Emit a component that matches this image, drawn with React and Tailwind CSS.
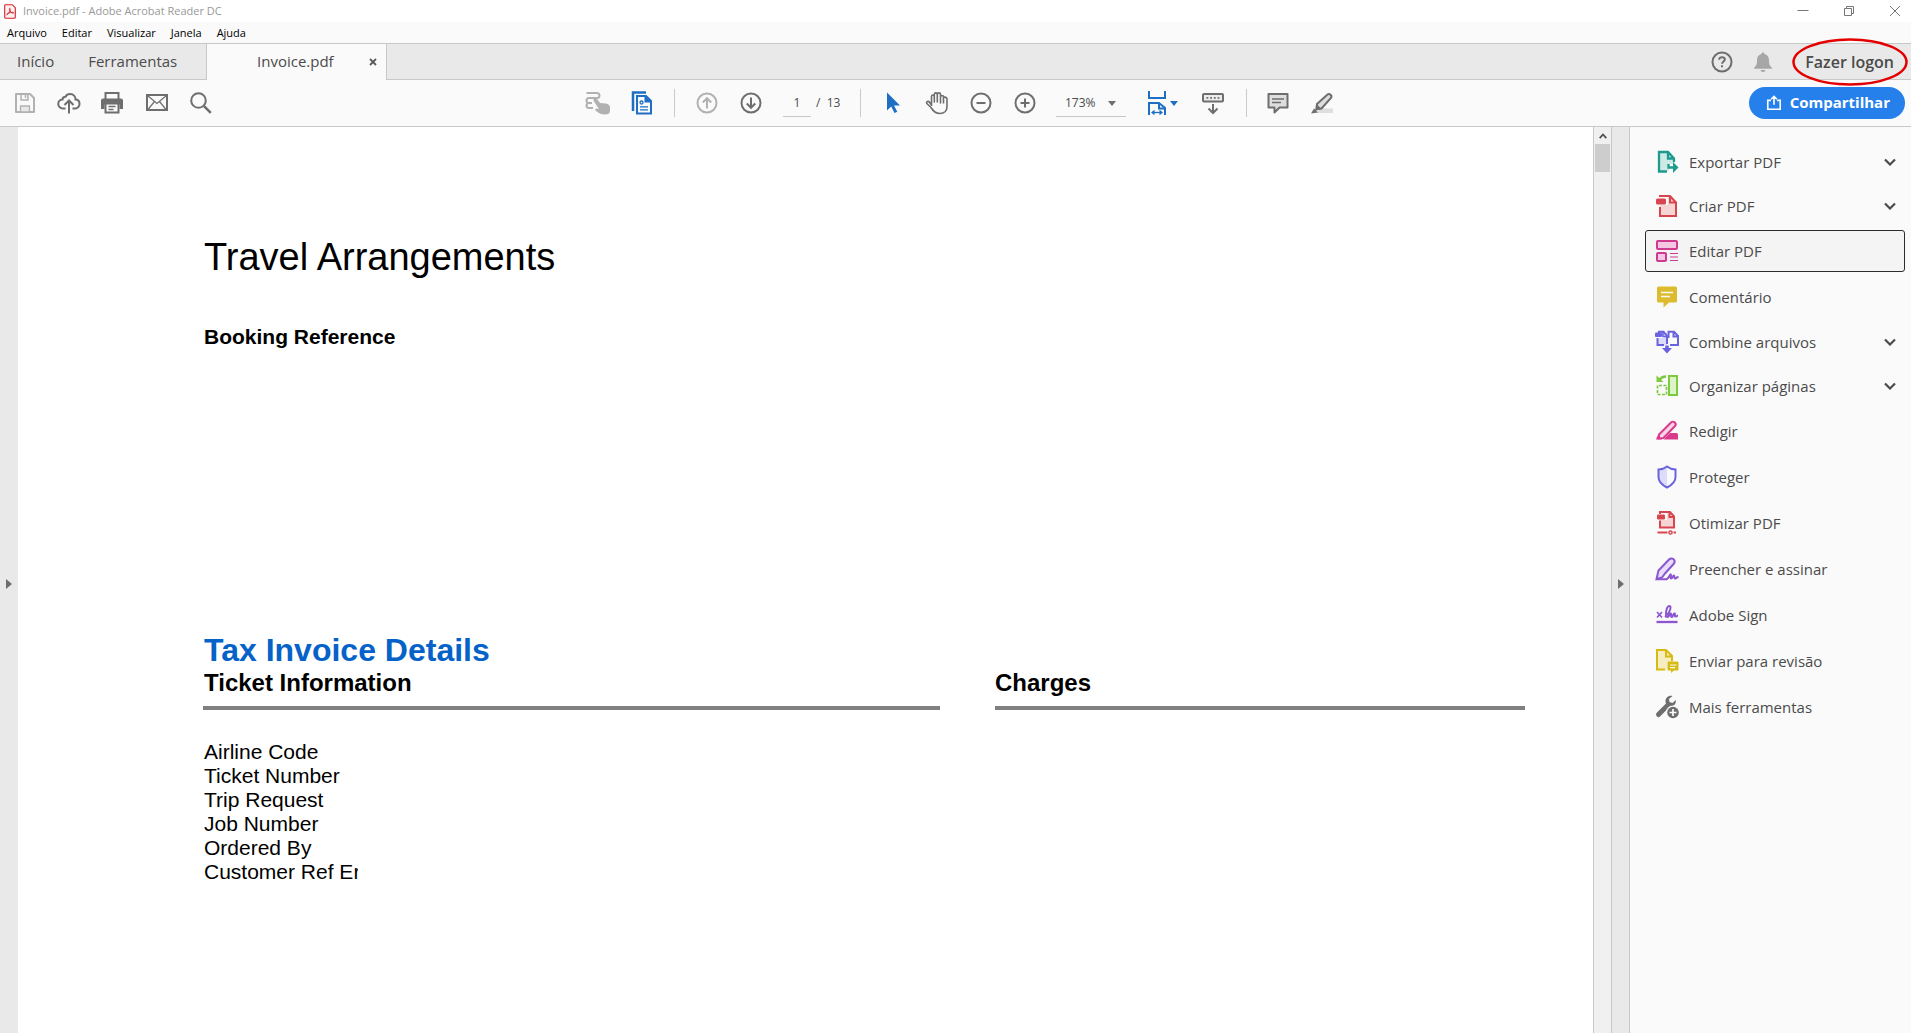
import { useState } from "react";

const menus = ["Arquivo", "Editar", "Visualizar", "Janela", "Ajuda"];

const ticketFields = [
  "Airline Code",
  "Ticket Number",
  "Trip Request",
  "Job Number",
  "Ordered By",
  "Customer Ref Er",
];

// Base wrapper for all 24px icons
function Icon({ children, className = "" }) {
  return (
    <svg
      viewBox="0 0 24 24"
      className={`size-6 shrink-0 overflow-visible ${className}`}
      fill="none"
      stroke="currentColor"
      strokeWidth="2"
      aria-hidden="true"
    >
      {children}
    </svg>
  );
}

function ToolButton({ label, className = "text-[#6e6e6e]", children }) {
  return (
    <button type="button" aria-label={label} className={`flex h-11 w-11 items-center justify-center ${className}`}>
      <Icon>{children}</Icon>
    </button>
  );
}

function Separator() {
  return (
    <div className="flex w-[22px] justify-center">
      <div className="h-7 w-px bg-[#cacaca]" />
    </div>
  );
}

const tools = [
  {
    name: "Exportar PDF",
    color: "text-[#1f9a8e]",
    expandable: true,
    icon: (
      <>
        <path d="M4 2h9l6 6v6h-5v7H4z" fill="#cdeae6" stroke="none" />
        <path d="M12 21.500H4V2h9l6 6.500V12M13 2v6.500h6" strokeWidth="2.300" />
        <path d="M13.500 14v3.500h6" strokeWidth="2.300" />
        <path d="M18 12l5.500 5.500L18 23z" fill="currentColor" stroke="none" />
      </>
    ),
  },
  {
    name: "Criar PDF",
    color: "text-[#d9454f]",
    expandable: true,
    icon: (
      <>
        <path d="M5 11h8V3h3l5 6v13H5z" fill="#f5d5d3" stroke="none" />
        <path d="M5 3V2h10l6 6.500V22H5v-9M15 2v6.500h6" />
        <rect x="1" y="4.500" width="10" height="6" rx="1.500" fill="currentColor" stroke="none" />
      </>
    ),
  },
  {
    name: "Editar PDF",
    color: "text-[#cf3a8e]",
    active: true,
    icon: (
      <>
        <rect x="2" y="2" width="20" height="8" rx="1" fill="#f5c6e4" />
        <rect x="2" y="14" width="9" height="8" rx="1" fill="#f5c6e4" />
        <path d="M15 14.500h8M15 18h8M15 21.500h8" strokeWidth="1.200" />
      </>
    ),
  },
  {
    name: "Comentário",
    color: "text-[#dcbc2e]",
    icon: (
      <>
        <path d="M3.500 1.500h17a1.500 1.500 0 0 1 1.500 1.500v13a1.500 1.500 0 0 1-1.500 1.500H14L8.500 22.500v-5h-5A1.500 1.500 0 0 1 2 16V3a1.500 1.500 0 0 1 1.500-1.500z" fill="currentColor" stroke="none" />
        <path d="M6 7.500h12M6 11.500h9" stroke="#fafafa" strokeWidth="1.600" />
      </>
    ),
  },
  {
    name: "Combine arquivos",
    color: "text-[#6a63e0]",
    expandable: true,
    icon: (
      <>
        <path d="M3 8h6V3h3v12H3z" fill="#dddcfb" stroke="none" />
        <path d="M2.500 8v7h6.500M4 3V1.800h4.500l3.500 4V14" />
        <path d="M15 15h8V6l-4-4.200h-5.500V8M18.500 2v4.500H23" />
        <path d="M8 2v4.500h4" strokeWidth="1.600" />
        <rect x="0" y="2.500" width="7" height="4.500" rx="1" fill="currentColor" stroke="none" />
        <path d="M12 15.500v4" strokeWidth="3.500" />
        <path d="M7 18h10l-5 5.500z" fill="currentColor" stroke="none" />
      </>
    ),
  },
  {
    name: "Organizar páginas",
    color: "text-[#7ccb3c]",
    expandable: true,
    icon: (
      <>
        <rect x="14" y="2" width="8" height="19" fill="#ddf4c8" />
        <path d="M11.500 11.500H2.500v9h9z" strokeDasharray="3 1.500" strokeWidth="1.700" />
        <path d="M1.500 1.500v6.500h7z" fill="currentColor" stroke="none" />
        <path d="M4.500 6c1.500-2.500 3.500-3.500 6.500-3.500" strokeWidth="2.500" />
      </>
    ),
  },
  {
    name: "Redigir",
    color: "text-[#d93a8c]",
    icon: (
      <>
        <path d="M4 15.500L16 3.500a2.600 2.600 0 0 1 3.800 3.800L8.500 19l-4.500.500z" fill="#f8d3e8" />
        <path d="M15 14h6.500a1.500 1.500 0 0 1 1.500 1.500V20.500H8.500z" fill="currentColor" stroke="none" />
        <path d="M2.500 16.500L7 20.500H1z" fill="currentColor" stroke="none" />
      </>
    ),
  },
  {
    name: "Proteger",
    color: "text-[#6a63e0]",
    icon: (
      <>
        <path d="M12 2v20c-5-2.500-8.500-6-8.500-10V4.500C7 4.500 9.500 3.500 12 2z" fill="#dddcfb" stroke="none" />
        <path d="M12 1.500c2.500 2 5 2.800 8.500 3V12c0 4.500-3.500 8-8.500 10.500C7 20 3.500 16.500 3.500 12V4.500c3.500-.2 6-1 8.500-3z" />
      </>
    ),
  },
  {
    name: "Otimizar PDF",
    color: "text-[#d9454f]",
    icon: (
      <>
        <path d="M5 9h7V2l7 5v10H5z" fill="#f5d5d3" stroke="none" />
        <path d="M5 3V1h10l4 4.500V16.500H5v-7M14.500 1v5H19" />
        <rect x="2" y="3.500" width="8" height="5" rx="1.200" fill="currentColor" stroke="none" />
        <path d="M2.500 21.500h10M18.500 21.500H21" strokeWidth="2" />
        <circle cx="15.500" cy="21.500" r="1.600" strokeWidth="1.500" />
      </>
    ),
  },
  {
    name: "Preencher e assinar",
    color: "text-[#8b56cf]",
    icon: (
      <>
        <path d="M1.500 22l2-8.500L14 2.500c1.600-1.600 4-1.200 5 .200s.8 3-.4 4.300L10 16.500l-3 4z" fill="#e9dcfa" />
        <path d="M1 22.300h9.500c3 0 4-4.300 5-4.800 1.300-.5-.7 3.800.7 4 1.300 0 1.500-3 2.700-3 1 0 0 3 1.200 3s1.200-1.500 3.400-1.500" />
      </>
    ),
  },
  {
    name: "Adobe Sign",
    color: "text-[#8b56cf]",
    icon: (
      <>
        <path d="M2 9l5 5.500M7 9l-5 5.500" strokeWidth="1.700" />
        <path d="M10 14c3-2.500 6-7 5.500-10-.5-2-3-1-3.800 2-.8 3-1.200 8 .8 8s1.500-3.500 3-3.500-.3 3.500 1.300 3.500 1.200-3.500 2.600-3.500-.3 3 1.200 3 1.400-1 2.400-1" />
        <path d="M1.500 19h21" strokeWidth="2.300" />
      </>
    ),
  },
  {
    name: "Enviar para revisão",
    color: "text-[#d8bb12]",
    icon: (
      <>
        <path d="M2 1.500h9l6 6V13h-5v8H2z" fill="#f6edc0" stroke="none" />
        <path d="M10 20.500H2V1h9l6 6v5M11 1v6.500h6" />
        <path d="M13.500 12.500h9a1 1 0 0 1 1 1v7a1 1 0 0 1-1 1H19l-3 2.500v-2.500h-2.500a1 1 0 0 1-1-1v-7a1 1 0 0 1 1-1z" fill="currentColor" stroke="none" />
        <path d="M15 16h6.500M15 18.700h5" stroke="#fafafa" strokeWidth="1.200" />
      </>
    ),
  },
  {
    name: "Mais ferramentas",
    color: "text-[#6e6e6e]",
    icon: (
      <>
        <path d="M3.500 19.500L13 10" strokeWidth="5" strokeLinecap="round" />
        <path d="M17.500 1c-4-.8-7.500 2-7 6 .4 3.200 4 5 7 4 2.500-.8 3.700-3 3.300-6l-3.300 3-3-1-.5-3z" fill="currentColor" stroke="none" />
        <circle cx="18" cy="17.500" r="7" fill="#fafafa" stroke="none" />
        <circle cx="18" cy="17.500" r="5.800" fill="currentColor" stroke="none" />
        <path d="M18 14v7M14.500 17.500h7" stroke="#fafafa" strokeWidth="1.700" />
      </>
    ),
  },
];

function TitleBar() {
  return (
    <div className="flex h-[22px] items-center justify-between bg-white pl-1">
      <div className="flex items-center gap-[7px] text-[11px] leading-4 text-[#999999]">
        <svg viewBox="0 0 12 15" className="h-[15px] w-3" fill="none" stroke="#d3232b" aria-hidden="true">
          <path d="M1.500.7h6.800l3 3v9.600a1 1 0 0 1-1 1H1.700a1 1 0 0 1-1-1V1.500a.8.8 0 0 1 .8-.8z" fill="#fdf0f0" strokeWidth="1.100" />
          <path d="M2.500 11c1.800-.6 4-3.800 3.600-6.200-.2-1-.9-.5-.7.600.3 1.900 2.200 4 4 3.800 1-.2.300-1-1-.9-2 .1-4.600.8-5.700 1.700" strokeWidth=".9" />
        </svg>
        <span>Invoice.pdf - Adobe Acrobat Reader DC</span>
      </div>
      <div className="flex gap-[14px] text-[#777777]">
        <button type="button" aria-label="Minimizar" className="flex w-8 justify-center">
          <svg viewBox="0 0 12 12" className="size-3" stroke="currentColor">
            <path d="M.5 5.500h11" />
          </svg>
        </button>
        <button type="button" aria-label="Restaurar" className="flex w-8 justify-center">
          <svg viewBox="0 0 12 12" className="size-3" fill="none" stroke="currentColor">
            <path d="M1.500 3.500h7v7h-7zM3.500 3V1.500h7v7H9" />
          </svg>
        </button>
        <button type="button" aria-label="Fechar" className="flex w-8 justify-center">
          <svg viewBox="0 0 12 12" className="size-3" stroke="currentColor">
            <path d="M1 1l10 10M11 1L1 11" />
          </svg>
        </button>
      </div>
    </div>
  );
}

function MenuBar() {
  return (
    <nav className="flex h-[21px] items-center gap-[15px] bg-[#fafafa] pl-[7px] text-[11px] leading-4 text-black">
      {menus.map((menu) => (
        <button key={menu} type="button">
          {menu}
        </button>
      ))}
    </nav>
  );
}

function TabBar() {
  return (
    <div className="flex h-[37px] items-stretch justify-between border-t border-[#c8c8c8] bg-[#e9e9e9] text-[15px] text-[#4b4b4b]">
      <div className="flex flex-1">
        <div className="flex w-[206px] items-center gap-[34px] border-b border-[#c8c8c8] pl-[17px]">
          <button type="button">Início</button>
          <button type="button">Ferramentas</button>
        </div>
        <div className="flex w-[181px] items-center border-x border-[#c8c8c8] bg-[#fafafa] pb-px pl-[50px]">
          <button type="button" className="flex-1 text-left">
            Invoice.pdf
          </button>
          <button type="button" aria-label="Fechar guia" className="mr-2 flex size-[10px] items-center justify-center">
            <svg viewBox="0 0 8 8" className="size-2" stroke="#5a5a5a" strokeWidth="1.800">
              <path d="M1 1l6 6M7 1L1 7" />
            </svg>
          </button>
        </div>
        <div className="flex-1 border-b border-[#c8c8c8]" />
      </div>
      <div className="flex items-center border-b border-[#c8c8c8] pr-[17px]">
        <button type="button" aria-label="Ajuda" className="flex w-[41px] justify-center text-[#6e6e6e]">
          <Icon>
            <circle cx="12" cy="12" r="9.500" />
            <path d="M9.200 9.800c0-1.700 1.100-2.600 2.800-2.600s2.800.9 2.800 2.300c0 2-2.700 2-2.700 4.200M12 15.200v2" />
          </Icon>
        </button>
        <button type="button" aria-label="Notificações" className="flex w-[41px] justify-center text-[#a6a6a6]">
          <Icon>
            <path d="M12 2.500c1 0 1.500.600 1.500 1.500C17 4.800 18 7.500 18 11c0 3.500.8 5 2.800 6.500v1.300H3.200v-1.300C5.200 16 6 14.500 6 11c0-3.500 1-6.200 4.500-7 0-.900.500-1.500 1.500-1.500z" fill="currentColor" stroke="none" />
            <path d="M9.500 20h5a2.500 2 0 0 1-5 0z" fill="currentColor" stroke="none" />
          </Icon>
        </button>
        <div className="relative ml-[22px]">
          <button type="button" className="text-base font-semibold">
            Fazer logon
          </button>
          <svg
            viewBox="0 0 116 48"
            className="pointer-events-none absolute top-1/2 left-1/2 z-10 h-12 w-[116px] max-w-none -translate-x-1/2 -translate-y-1/2"
            fill="none"
            aria-hidden="true"
          >
            <ellipse cx="58" cy="24" rx="56.500" ry="22.500" stroke="#e40000" strokeWidth="2.500" />
          </svg>
        </div>
      </div>
    </div>
  );
}

function Toolbar() {
  const [page, setPage] = useState("1");
  const [zoom, setZoom] = useState("173%");

  return (
    <div className="grid h-[47px] grid-cols-[1fr_auto_1fr] items-center border-b border-[#c8c8c8] bg-[#fafafa] text-[12px] text-[#4b4b4b]">
      <div className="flex items-center pl-[3px]">
        <ToolButton label="Salvar" className="text-[#b1b1b1]">
          <path d="M3 3h14l4 4v14H3z" strokeLinejoin="round" />
          <path d="M8 3v6h7V3M12.500 4v3" strokeWidth="1.500" />
          <path d="M7.500 21v-6h9v6z" fill="#e8e8e8" strokeWidth="1.300" />
        </ToolButton>
        <ToolButton label="Enviar para a nuvem">
          <path d="M8.500 17.500H6a4.500 4.500 0 0 1-.5-9 3 3 0 0 1 3-2.800C9.500 3.700 11.200 3 13 3c3.500 0 5.500 2.500 5.500 5.500 2.500 0 4 2 4 4.500s-2 4.500-4 4.500h-3" />
          <path d="M12 22.500V10M7.500 14L12 9.500l4.500 4.500" />
        </ToolButton>
        <ToolButton label="Imprimir">
          <path d="M4.500 8V2h13v6" />
          <path d="M2 7.500h18a2 2 0 0 1 2 2V18h-3.500v-4.500h-15V18H0V9.500a2 2 0 0 1 2-2z" fill="currentColor" stroke="none" />
          <path d="M4.500 12.500h13v9h-13z" fill="#fafafa" />
          <path d="M7.500 15.500h7M7.500 18.500h5" strokeWidth="1.300" />
        </ToolButton>
        <ToolButton label="Enviar por e-mail">
          <rect x="2" y="4" width="20" height="15" />
          <path d="M2.500 4.500l9.500 8 9.500-8M3 18.500l6.500-8M21 18.500l-6.500-8" strokeWidth="1.200" />
        </ToolButton>
        <ToolButton label="Localizar">
          <circle cx="9.500" cy="9.500" r="7.300" />
          <path d="M14.800 14.800l7 7" strokeWidth="2.600" />
        </ToolButton>
      </div>

      <div className="flex items-center pl-[9px]">
        <ToolButton label="Rolagem" className="text-[#b1b1b1]">
          <path d="M1.500 2h10.500a2.500 2.500 0 0 1 0 5H4a2.500 2.500 0 0 0 0 5h3M4 12a2.500 2.500 0 0 0 0 5h4" />
          <path d="M9 7.500c1-1 2.300-.700 3 .500l3 4 6 .5c2 .300 4 1.500 4 4v3c0 3-2 4-5 4-4 0-6-1-9-3.500-1.500-1.300-.500-2.800 1.500-2.300l1.500.300L9 10.500c-.7-1.200-.7-2.200 0-3z" fill="currentColor" stroke="none" />
        </ToolButton>
        <ToolButton label="Miniaturas de página" className="text-[#1e6fc4]">
          <path d="M4 20V1.500h13" strokeWidth="2.500" />
          <path d="M8 5h9l5 5v12.500H8z" />
          <path d="M16.500 5v5.500H22" fill="currentColor" />
          <circle cx="12.500" cy="11.500" r="1.500" strokeWidth="1.300" />
          <path d="M11 15.800h8M11 18.800h8" strokeWidth="1.300" />
        </ToolButton>
        <Separator />
        <ToolButton label="Página anterior" className="text-[#b1b1b1]">
          <circle cx="12" cy="12" r="9.500" />
          <path d="M12 17.500V7.500M7.800 11.500L12 7.200l4.200 4.300" />
        </ToolButton>
        <ToolButton label="Próxima página">
          <circle cx="12" cy="12" r="9.500" />
          <path d="M12 6.500v10M7.800 12.500l4.200 4.300 4.200-4.300" />
        </ToolButton>
        <div className="flex w-[76px] items-center gap-[5px] pl-[10px]">
          <input
            type="text"
            aria-label="Página"
            value={page}
            onChange={(e) => setPage(e.target.value)}
            className="h-7 w-7 border-b border-[#c8c8c8] bg-transparent text-center outline-none"
          />
          <span className="whitespace-pre">/  13</span>
        </div>
        <Separator />
        <ToolButton label="Selecionar" className="text-[#1e6fc4]">
          <path d="M6 1.500v18l4.200-4 3.300 6.500 2.800-1.300L13 14.500h6z" fill="currentColor" stroke="none" />
        </ToolButton>
        <ToolButton label="Mão">
          <path
            d="M6.500 15V5.500c0-2 2.800-2 2.800 0V11 3.500c0-2.200 3-2.200 3 0V11 3.500c0-2.200 3.200-2.200 3.200 0V12 6c0-2 3-2 3 0 0 0 3.500-.300 3.500 2v7.500c0 4.500-3 7-7 7-5 0-7-2.500-9-6L1.800 12.500c-.9-2 1.500-2.800 2.700-1.300L6.500 14M18.500 6v6.500"
            strokeWidth="1.600"
            strokeLinejoin="round"
          />
        </ToolButton>
        <ToolButton label="Menos zoom">
          <circle cx="12" cy="12" r="9.500" />
          <path d="M7.500 12h9" />
        </ToolButton>
        <ToolButton label="Mais zoom">
          <circle cx="12" cy="12" r="9.500" />
          <path d="M7.500 12h9M12 7.500v9" />
        </ToolButton>
        <div className="flex w-[88px] justify-center">
          <div className="relative w-[70px]">
            <select
              aria-label="Zoom"
              value={zoom}
              onChange={(e) => setZoom(e.target.value)}
              className="h-7 w-full appearance-none border-b border-[#c8c8c8] bg-transparent pl-[9px] outline-none"
            >
              <option>173%</option>
            </select>
            <svg viewBox="0 0 8 5" className="pointer-events-none absolute top-3 right-[10px] h-[5px] w-2" fill="#6e6e6e">
              <path d="M0 0h8L4 5z" />
            </svg>
          </div>
        </div>
        <button type="button" aria-label="Ajustar à largura" className="flex h-11 w-14 items-center gap-px pl-[10px] text-[#1e6fc4]">
          <Icon>
            <path d="M4 0v7h16V0M4 24V12h10l6 5v7" />
            <path d="M14 12v5.500h6" />
            <path d="M7.500 21.500h9" strokeWidth="1.300" />
            <path d="M9.500 18.800v5.400L6 21.500zM14.500 18.800v5.400l3.500-2.700z" fill="currentColor" stroke="none" />
          </Icon>
          <svg viewBox="0 0 8 5" className="h-[5px] w-2" fill="currentColor">
            <path d="M0 0h8L4 5z" />
          </svg>
        </button>
        <ToolButton label="Barra flutuante">
          <rect x="2" y="3" width="20" height="7.500" rx="1" fill="#ececec" />
          <path d="M5.500 6.800h13" strokeDasharray="1.800 1.900" strokeWidth="1.800" />
          <path d="M12 13v8.500M7.500 17.500L12 22l4.500-4.500" />
        </ToolButton>
        <Separator />
        <ToolButton label="Adicionar nota">
          <path d="M1.500 3h19v13.500h-8L7.500 21.500v-5h-6z" fill="#dedede" strokeLinejoin="round" />
          <path d="M5 8h12M5 11.500h9" strokeWidth="1.300" />
        </ToolButton>
        <ToolButton label="Realçar">
          <path d="M10 17.500h12V22H5z" fill="#dedede" stroke="none" />
          <path d="M6 13L16.500 3.500C18.500 2 21.500 4.500 20 7L10.500 17.500l-4 .500z" fill="#dedede" />
          <path d="M5 13l6 5-7 2z" fill="currentColor" stroke="none" />
          <path d="M3 17.500l4 4-7 1z" fill="currentColor" stroke="none" />
        </ToolButton>
      </div>

      <div className="flex justify-end pr-[6px]">
        <button
          type="button"
          className="mb-px flex h-8 items-center gap-2 rounded-full bg-[#2680eb] pr-[15px] pl-[17px] text-[15px] font-bold text-white"
        >
          <svg viewBox="0 0 18 18" className="size-4" fill="none" stroke="currentColor" strokeWidth="1.800" aria-hidden="true">
            <path d="M5.500 6H2v10h14V6h-3.500M9 11V2M5.800 4.800L9 1.600l3.200 3.200" />
          </svg>
          Compartilhar
        </button>
      </div>
    </div>
  );
}

function Document() {
  return (
    <article className="min-w-0 flex-1 bg-white pt-27 pr-[68px] pl-[185px] font-['Liberation_Sans',Arial,sans-serif] text-black">
      <div className="pl-px">
        <h1 className="text-[38px] leading-11">Travel Arrangements</h1>
        <h2 className="mt-[46px] text-[21px] leading-6 font-bold">Booking Reference</h2>
        <h2 className="mt-[283px] text-[32px] leading-9 font-bold text-[#0562c8]">Tax Invoice Details</h2>
      </div>
      <div className="mt-px grid grid-cols-[737fr_530fr] gap-[55px]">
        <section>
          <h3 className="border-b-4 border-[#808080] pb-[9px] pl-px text-[24px] leading-7 font-bold">Ticket Information</h3>
          <ul className="mt-[30px] w-[155px] overflow-hidden pl-px text-[21px] leading-6 whitespace-nowrap">
            {ticketFields.map((field) => (
              <li key={field}>{field}</li>
            ))}
          </ul>
        </section>
        <section>
          <h3 className="border-b-4 border-[#808080] pb-[9px] text-[24px] leading-7 font-bold">Charges</h3>
        </section>
      </div>
    </article>
  );
}

function ToolPanel() {
  return (
    <aside className="w-[281px] shrink-0 bg-[#fafafa] pt-[13px] pr-[6px] pl-[15px]">
      {tools.map((tool) => (
        <div key={tool.name} className={tool.expandable ? "py-px" : "py-[2px]"}>
          <button
            type="button"
            className={`flex h-[42px] w-full items-center rounded-[3px] border pr-2 pl-[9px] text-[15px] text-[#4b4b4b] ${
              tool.active ? "border-[#2c2c2c] bg-[#f4f4f4]" : "border-transparent"
            }`}
          >
            <Icon className={tool.color}>{tool.icon}</Icon>
            <span className="ml-[10px] flex-1 text-left">{tool.name}</span>
            {tool.expandable && (
              <svg viewBox="0 0 12 8" className="h-2 w-3" fill="none" stroke="#4b4b4b" strokeWidth="2.200" aria-hidden="true">
                <path d="M1 1.500l5 5 5-5" />
              </svg>
            )}
          </button>
        </div>
      ))}
    </aside>
  );
}

export default function App() {
  return (
    <div className="flex min-h-screen flex-col bg-[#fafafa] font-['Open_Sans','Noto_Sans',sans-serif]">
      <TitleBar />
      <MenuBar />
      <TabBar />
      <Toolbar />
      <main className="flex flex-1">
        <button type="button" aria-label="Abrir painel de navegação" className="flex w-[18px] shrink-0 items-center justify-center bg-[#e9e9e9] pt-2">
          <svg viewBox="0 0 6 10" className="h-[10px] w-[6px]" fill="#6e6e6e">
            <path d="M0 0l6 5-6 5z" />
          </svg>
        </button>
        <Document />
        {/* scrollbar */}
        <div className="w-[19px] shrink-0 border-x border-[#c8c8c8] bg-[#f0f0f0] px-px">
          <div className="flex h-[17px] items-center justify-center">
            <svg viewBox="0 0 8 6" className="h-[6px] w-2" fill="none" stroke="#505050" strokeWidth="1.800">
              <path d="M.7 5.200L4 1.500l3.300 3.700" />
            </svg>
          </div>
          <div className="h-7 bg-[#cdcdcd]" />
        </div>
        <button
          type="button"
          aria-label="Recolher painel de ferramentas"
          className="flex w-[18px] shrink-0 items-center justify-center border-r border-[#c8c8c8] bg-[#e9e9e9] pt-2"
        >
          <svg viewBox="0 0 6 10" className="h-[10px] w-[6px]" fill="#6e6e6e">
            <path d="M0 0l6 5-6 5z" />
          </svg>
        </button>
        <ToolPanel />
      </main>
    </div>
  );
}
